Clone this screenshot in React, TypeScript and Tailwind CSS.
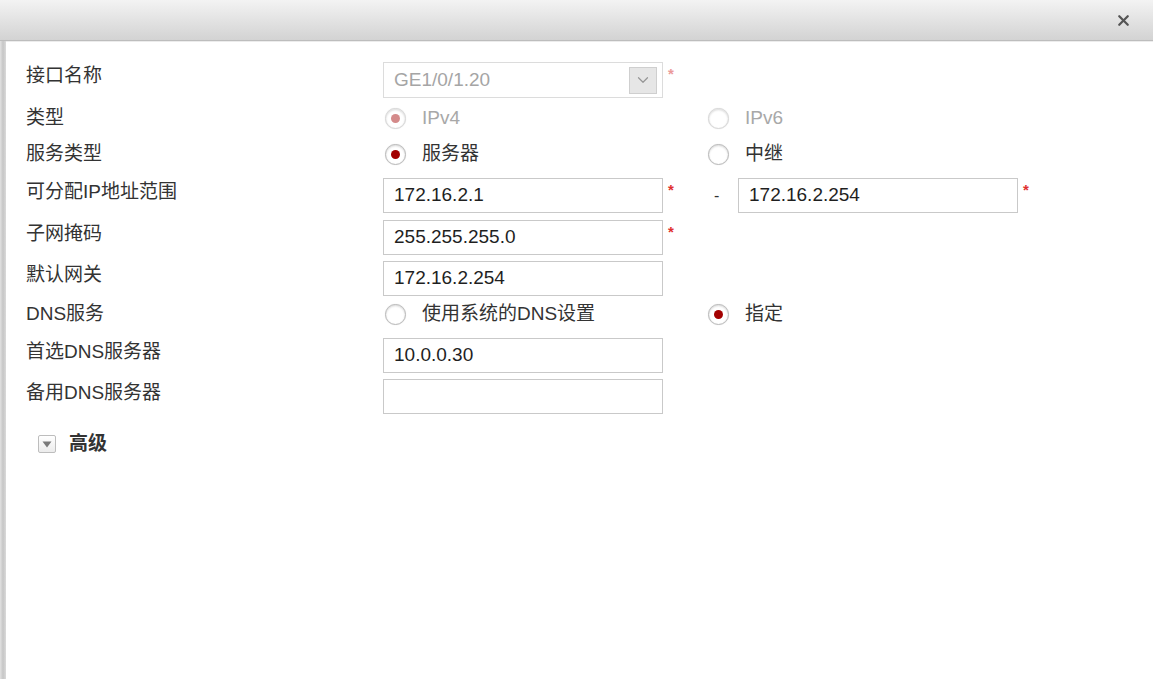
import React from 'react';
import { X, ChevronDown } from 'lucide-react';

const font = { fontFamily: '"Liberation Sans", Arial, "Noto Sans CJK SC", sans-serif' };

const Star = () => <span className="ml-[5px] mt-[4px] self-start text-[15px] font-bold leading-none text-[#e0302f]">*</span>;

const Radio = ({ checked, disabled, label }: { checked?: boolean; disabled?: boolean; label: string }) => (
  <div className="flex items-center">
    <span
      className={`ml-[2px] flex h-[21px] w-[21px] items-center justify-center rounded-full border bg-white shadow-[inset_0_1px_2px_rgba(0,0,0,0.15),0_0_1px_rgba(0,0,0,0.15)] ${
        disabled ? 'border-[#d8d8d8]' : 'border-[#bababa]'
      }`}
    >
      {checked && <span className={`h-[9px] w-[9px] rounded-full ${disabled ? 'bg-[#d48a8a]' : 'bg-[#a30000]'}`} />}
    </span>
    <span className={`ml-[16px] text-[19px] leading-6 ${disabled ? 'text-[#a8a8a8]' : 'text-[#333]'}`}>{label}</span>
  </div>
);

const Input = ({ value }: { value?: string }) => (
  <div className="flex h-[35px] w-[280px] items-center border border-[#c9c9c9] bg-white pl-[10px] text-[19px] text-[#1f1f1f]">
    {value}
  </div>
);

// top = label sits near the top of a tall control; otherwise centred on the row
const Label = ({ children, top }: { children: React.ReactNode; top?: boolean }) => (
  <div className={`w-[357px] shrink-0 text-[19px] leading-6 text-[#333] ${top ? 'self-start pt-[2px]' : ''}`}>{children}</div>
);

export default function App() {
  return (
    <div className="flex h-[679px] w-[1153px] flex-col overflow-hidden bg-white" style={font}>
      {/* title bar */}
      <div className="flex h-[41px] shrink-0 items-center justify-end border-b border-[#bdbdbd] bg-gradient-to-b from-[#f3f3f3] to-[#d3d3d3] pr-[21px]">
        <X size={17} strokeWidth={3.2} className="text-[#555]" />
      </div>

      <div className="flex flex-1">
        <div className="w-[6px] shrink-0 bg-gradient-to-r from-[#e2e2e2] via-[#c6c6c6] to-[#dadada]" />

        <div className="flex flex-1 flex-col border-t border-[#ececec] pl-[20px]">
          {/* 接口名称 */}
          <div className="mt-[20px] flex h-[36px] items-center">
            <Label top>接口名称</Label>
            <div className="flex h-[36px] w-[280px] items-center justify-between border border-[#dcdcdc] bg-white pl-[10px] pr-[5px]">
              <span className="text-[19px] text-[#a5a5a5]">GE1/0/1.20</span>
              <span className="flex h-[27px] w-[28px] items-center justify-center border border-[#cfcfcf] bg-[#e6e6e6]">
                <ChevronDown size={18} strokeWidth={1.6} className="text-[#969696]" />
              </span>
            </div>
            <span className="ml-[5px] mt-[4px] self-start text-[15px] font-bold leading-none text-[#eb9a9a]">*</span>
          </div>

          {/* 类型 */}
          <div className="mt-[3px] flex h-[34px] items-center">
            <Label>类型</Label>
            <div className="w-[323px]">
              <Radio checked disabled label="IPv4" />
            </div>
            <Radio disabled label="IPv6" />
          </div>

          {/* 服务类型 */}
          <div className="mt-[2px] flex h-[34px] items-center">
            <Label>服务类型</Label>
            <div className="w-[323px]">
              <Radio checked label="服务器" />
            </div>
            <Radio label="中继" />
          </div>

          {/* 可分配IP地址范围 */}
          <div className="mt-[7px] flex h-[35px] items-center">
            <Label top>可分配IP地址范围</Label>
            <div className="flex w-[323px] items-center">
              <Input value="172.16.2.1" />
              <Star />
            </div>
            <span className="ml-[8px] w-[24px] text-[16px] text-[#333]">-</span>
            <Input value="172.16.2.254" />
            <Star />
          </div>

          {/* 子网掩码 */}
          <div className="mt-[7px] flex h-[35px] items-center">
            <Label top>子网掩码</Label>
            <Input value="255.255.255.0" />
            <Star />
          </div>

          {/* 默认网关 */}
          <div className="mt-[6px] flex h-[35px] items-center">
            <Label top>默认网关</Label>
            <Input value="172.16.2.254" />
          </div>

          {/* DNS服务 */}
          <div className="mt-[1px] flex h-[34px] items-center">
            <Label>DNS服务</Label>
            <div className="w-[323px]">
              <Radio label="使用系统的DNS设置" />
            </div>
            <Radio checked label="指定" />
          </div>

          {/* 首选DNS服务器 */}
          <div className="mt-[7px] flex h-[35px] items-center">
            <Label top>首选DNS服务器</Label>
            <Input value="10.0.0.30" />
          </div>

          {/* 备用DNS服务器 */}
          <div className="mt-[6px] flex h-[35px] items-center">
            <Label top>备用DNS服务器</Label>
            <Input />
          </div>

          {/* 高级 */}
          <div className="mt-[18px] flex items-center pl-[12px]">
            <span className="flex h-[18px] w-[18px] items-center justify-center rounded-[2px] border border-[#bdbdbd] bg-gradient-to-b from-white to-[#ececec]">
              <svg width="10" height="7" viewBox="0 0 10 7">
                <path d="M0.5 0.5 H9.5 L5 6.5 Z" fill="#7a7a7a" />
              </svg>
            </span>
            <span className="ml-[13px] text-[19px] font-bold leading-6 text-[#333]">高级</span>
          </div>
        </div>
      </div>
    </div>
  );
}
